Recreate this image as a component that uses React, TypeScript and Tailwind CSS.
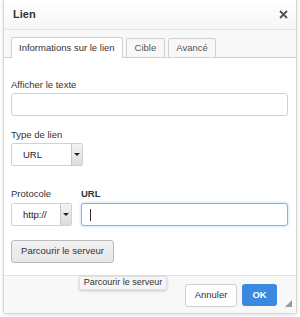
import React from "react";

const font = { fontFamily: '"Liberation Sans", Arial, sans-serif' };

const Arrow = () => (
  <div className="flex w-[11px] items-center justify-center border-l border-[#c9c9c9] bg-gradient-to-b from-[#f4f4f4] to-[#dcdcdc]">
    <span className="h-0 w-0 border-x-[3px] border-t-[3px] border-x-transparent border-t-[#222]" />
  </div>
);

const Label = ({ children, bold }: { children: React.ReactNode; bold?: boolean }) => (
  <div className={`h-[12px] text-[9.5px] leading-[12px] text-[#333] ${bold ? "font-bold" : ""}`}>{children}</div>
);

export default function App() {
  return (
    <div className="relative h-[317px] w-[300px] overflow-hidden bg-white" style={font}>
      <div className="ml-[3px] flex h-[314px] w-[294px] flex-col rounded-b-[3px] border-x border-b border-[#d6d6d6] bg-white shadow-[0_1px_4px_rgba(0,0,0,0.12)]">
        {/* header */}
        <div className="flex h-[30px] shrink-0 items-center justify-between border-b border-[#e6e6e6] bg-gradient-to-b from-white to-[#f6f6f6] pl-[9px] pr-[8px]">
          <span className="text-[11px] font-bold text-[#333]">Lien</span>
          <svg width="9" height="9" viewBox="0 0 9 9" className="mt-[-1px]">
            <path d="M1 1 L8 8 M8 1 L1 8" stroke="#555" strokeWidth="1.8" />
          </svg>
        </div>
        {/* tabs */}
        <div className="flex h-[27px] shrink-0 items-end gap-[3px] bg-[#f8f8f8] pl-[7px]">
          <div className="relative top-[1px] flex h-[21px] items-center rounded-t-[2px] border-x border-t border-[#d1d1d1] bg-white px-[7px] text-[9.5px] text-[#333]">
            Informations sur le lien
          </div>
          <div className="flex h-[19px] items-center rounded-t-[2px] border-x border-t border-[#d1d1d1] bg-[#f8f8f8] px-[8px] text-[9.5px] text-[#555]">
            Cible
          </div>
          <div className="flex h-[19px] items-center rounded-t-[2px] border-x border-t border-[#d1d1d1] bg-[#f8f8f8] px-[7px] text-[9.5px] text-[#555]">
            Avancé
          </div>
        </div>
        {/* body */}
        <div className="flex flex-1 flex-col border-t border-[#d1d1d1] bg-white px-[7px] pt-[21px]">
          <Label>Afficher le texte</Label>
          <div className="mt-[2px] h-[23px] w-[277px] rounded-[3px] border border-[#d1d1d1] bg-white" />

          <div className="mt-[13px]">
            <Label>Type de lien</Label>
          </div>
          <div className="mt-[2px] flex h-[23px] w-[72px] overflow-hidden rounded-[2px] border border-[#d1d1d1] bg-white">
            <span className="flex-1 pl-[11px] text-[9.5px] leading-[21px] text-[#222]">URL</span>
            <Arrow />
          </div>

          <div className="mt-[22px] flex gap-[9px]">
            <div className="flex w-[61px] flex-col gap-[3px]">
              <Label>Protocole</Label>
              <div className="flex h-[23px] overflow-hidden rounded-[2px] border border-[#d1d1d1] bg-white">
                <span className="flex-1 pl-[11px] text-[9.5px] leading-[21px] text-[#222]">http://</span>
                <Arrow />
              </div>
            </div>
            <div className="flex w-[207px] flex-col gap-[3px]">
              <Label bold>URL</Label>
              <div className="flex h-[23px] items-center rounded-[3px] border border-[#7fb4ec] bg-white pl-[8px] shadow-[0_0_3px_rgba(80,150,230,0.45)]">
                <span className="h-[12px] w-px bg-[#333]" />
              </div>
            </div>
          </div>

          <div className="mt-[14px] flex h-[23px] w-[103px] items-center justify-center rounded-[3px] border border-[#b9b9b9] bg-gradient-to-b from-[#f2f2f2] to-[#e6e6e6] text-[9.5px] text-[#333]">
            Parcourir le serveur
          </div>
        </div>
        {/* footer */}
        <div className="flex h-[38px] shrink-0 items-start justify-end gap-[5px] border-t border-[#e2e2e2] bg-[#f8f8f8] pr-[19px] pt-[8px]">
          <div className="flex h-[23px] w-[52px] items-center justify-center rounded-[3px] border border-[#d1d1d1] bg-white text-[9.5px] text-[#333]">
            Annuler
          </div>
          <div className="flex h-[22px] w-[35px] items-center justify-center rounded-[3px] bg-[#3b8ae0] text-[9.5px] font-bold text-white">
            OK
          </div>
        </div>
      </div>
      {/* resize grip */}
      <svg className="absolute left-[285px] top-[300px]" width="7" height="7" viewBox="0 0 7 7">
        <path d="M7 0 L7 7 L0 7 Z" fill="#9a9a9a" />
      </svg>
      {/* tooltip */}
      <div className="absolute left-[79px] top-[276px] flex h-[14px] w-[88px] items-center justify-center whitespace-nowrap rounded-[2px] border border-[#e0e0e0] bg-[#f6f6f6] text-[9px] text-[#333] shadow-[0_1px_3px_rgba(0,0,0,0.2)]">
        Parcourir le serveur
      </div>
    </div>
  );
}
